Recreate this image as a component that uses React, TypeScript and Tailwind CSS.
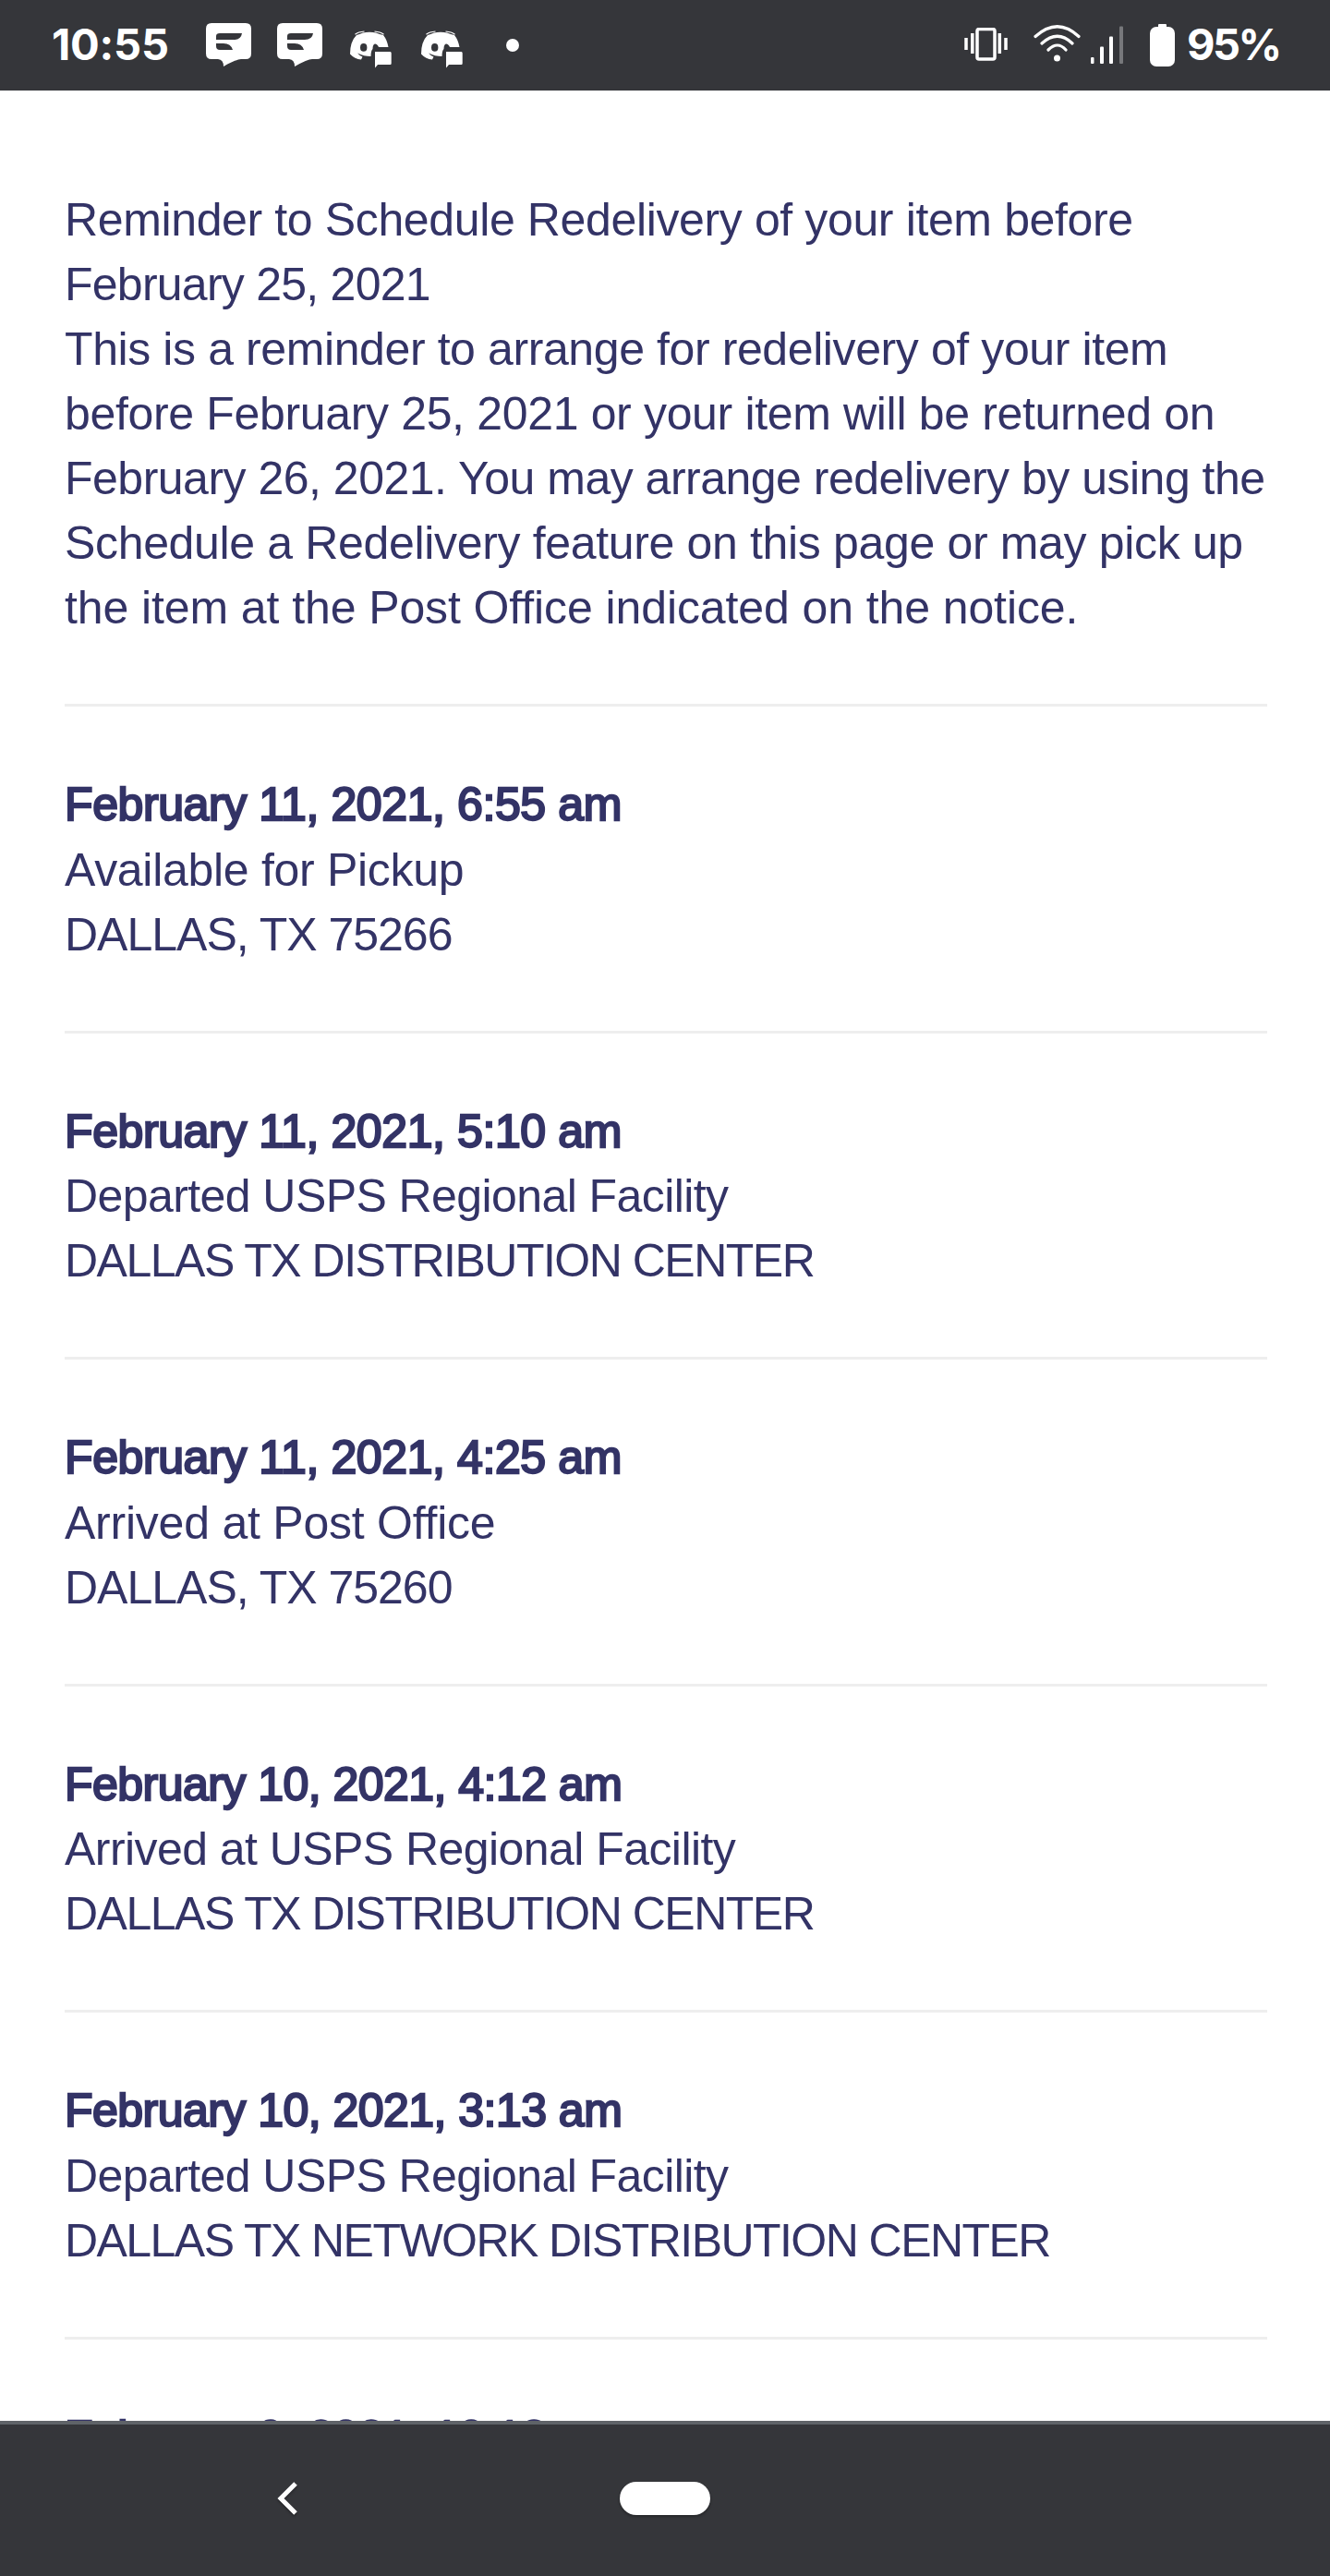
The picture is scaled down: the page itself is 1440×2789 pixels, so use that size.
import React from "react";
import clsx from "clsx";

interface TextLine {
  text: string;
  tracking: string;
}

interface TrackingEvent {
  date: TextLine;
  status?: TextLine;
  location?: TextLine;
}

const reminderLines: TextLine[] = [
  { text: "Reminder to Schedule Redelivery of your item before", tracking: "tracking-[-0.37px]" },
  { text: "February 25, 2021", tracking: "tracking-[-0.75px]" },
  { text: "This is a reminder to arrange for redelivery of your item", tracking: "tracking-[-0.4px]" },
  { text: "before February 25, 2021 or your item will be returned on", tracking: "tracking-[-0.34px]" },
  { text: "February 26, 2021. You may arrange redelivery by using the", tracking: "tracking-[-0.5px]" },
  { text: "Schedule a Redelivery feature on this page or may pick up", tracking: "tracking-[-0.34px]" },
  { text: "the item at the Post Office indicated on the notice.", tracking: "tracking-[-0.1px]" },
];

const events: TrackingEvent[] = [
  {
    date: { text: "February 11, 2021, 6:55 am", tracking: "tracking-[-0.4px]" },
    status: { text: "Available for Pickup", tracking: "tracking-[-0.3px]" },
    location: { text: "DALLAS, TX 75266", tracking: "tracking-[-1px]" },
  },
  {
    date: { text: "February 11, 2021, 5:10 am", tracking: "tracking-[-0.4px]" },
    status: { text: "Departed USPS Regional Facility", tracking: "tracking-[-0.58px]" },
    location: { text: "DALLAS TX DISTRIBUTION CENTER", tracking: "tracking-[-1.5px]" },
  },
  {
    date: { text: "February 11, 2021, 4:25 am", tracking: "tracking-[-0.4px]" },
    status: { text: "Arrived at Post Office", tracking: "tracking-[-0.23px]" },
    location: { text: "DALLAS, TX 75260", tracking: "tracking-[-1px]" },
  },
  {
    date: { text: "February 10, 2021, 4:12 am", tracking: "tracking-[-0.53px]" },
    status: { text: "Arrived at USPS Regional Facility", tracking: "tracking-[-0.56px]" },
    location: { text: "DALLAS TX DISTRIBUTION CENTER", tracking: "tracking-[-1.5px]" },
  },
  {
    date: { text: "February 10, 2021, 3:13 am", tracking: "tracking-[-0.53px]" },
    status: { text: "Departed USPS Regional Facility", tracking: "tracking-[-0.58px]" },
    location: { text: "DALLAS TX NETWORK DISTRIBUTION CENTER", tracking: "tracking-[-1.55px]" },
  },
  {
    date: { text: "February 9, 2021, 10:18", tracking: "tracking-[-0.53px]" },
  },
];

const ChatIcon: React.FC = () => (
  <svg width="49" height="47" viewBox="0 0 49 47" fill="#fff">
    <path
      fillRule="evenodd"
      d="M6 0H43Q49 0 49 6V33Q49 39 43 39H38Q33 39 19 47Q19 39.500 13 39H6Q0 39 0 33V6Q0 0 6 0ZM15 11Q11 11 11 14V18H30Q38 18 39 11ZM11 22V25Q11 29 15 29H29Q27 22 19 22Z"
    />
  </svg>
);

const DiscordIcon: React.FC = () => (
  <svg width="46" height="41" viewBox="0 0 46 41" fill="#fff">
    <path
      fillRule="evenodd"
      d="M7 5Q10 4 14 2.500Q21 1 28 2.500Q32 4 36 5Q40 10 41.500 18H31Q29.500 14.500 27 14.500Q24.500 15 24.500 20Q22.500 22 22.500 28Q15 28 8 24.500Q11 28 13.500 28.500L12 31.500Q5 31 0 25.500Q0 12 7 5ZM14.700 14A3.700 4.400 0 1 0 14.700 22.800A3.700 4.400 0 1 0 14.700 14Z"
    />
    <path d="M5.500 4.300Q9 1.500 15.500 1M36.500 4.300Q33 1.500 26.500 1" fill="none" stroke="#fff" strokeWidth="1.200" />
    <path d="M27 23H43.500Q44.700 23 44.700 24.500V35.500Q44.700 37 43.500 37H30L27 40.500Z" />
  </svg>
);

const VibrateIcon: React.FC = () => (
  <svg width="48" height="36" viewBox="0 0 48 36" fill="none" stroke="#fff" strokeWidth="3.500">
    <rect x="14" y="1.500" width="19" height="32.500" rx="2" />
    <path d="M2 11V24M8.800 6V28M38.300 6V28M45 11V24" />
  </svg>
);

const WifiIcon: React.FC = () => (
  <svg width="52" height="40" viewBox="0 0 52 40" fill="none" stroke="#fff" strokeWidth="3.200" strokeLinecap="round">
    <path d="M2 12.500Q26 -9 49 12.500M9 20Q26 4.600 42 20M16 27Q26 17 35 27" />
    <circle cx="25.500" cy="36" r="3.500" fill="#fff" stroke="none" />
  </svg>
);

const SignalIcon: React.FC = () => (
  <svg width="36" height="41" viewBox="0 0 36 41" fill="#fff">
    <rect x="0" y="34" width="3.500" height="7" rx="1" />
    <rect x="10" y="22.500" width="4" height="18.500" rx="1" />
    <rect x="20" y="11.500" width="4" height="29.500" rx="1" />
    <rect x="31" y="0.500" width="4" height="40.500" rx="1" fill="#77787b" />
  </svg>
);

const StatusBar: React.FC = () => (
  <div className="flex h-[98px] shrink-0 items-start bg-[#35363a] font-[Inter,sans-serif] text-[47px] leading-[56px] font-bold text-white">
    <span className="mt-[20px] ml-[56px] w-[167px] tracking-[-0.2px]">10:55</span>
    <div className="mt-[25px] flex">
      <div className="w-[77px]"><ChatIcon /></div>
      <div className="w-[79px]"><ChatIcon /></div>
      <div className="mt-[8px] w-[77px]"><DiscordIcon /></div>
      <div className="mt-[8px] w-[92px]"><DiscordIcon /></div>
    </div>
    <div className="mt-[42px] h-[14px] w-[14px] rounded-full bg-white" />
    <div className="mt-[30px] ml-auto"><VibrateIcon /></div>
    <div className="mt-[27px] ml-[27px]"><WifiIcon /></div>
    <div className="mt-[28px] ml-[10px]"><SignalIcon /></div>
    <div className="mt-[26px] ml-[28px] flex flex-col items-center">
      <div className="h-[3px] w-[9px] rounded-t-[1px] bg-white" />
      <div className="h-[43px] w-[27px] rounded-[7px] bg-white" />
    </div>
    <span className="mt-[20px] ml-[13px] w-[155px] tracking-[-2.5px]">95%</span>
  </div>
);

const EventRow: React.FC<{ event: TrackingEvent }> = ({ event }) => (
  <div className="h-[353.5px] shrink-0 border-t-[3px] border-[#eeeeee] pt-[71px]">
    <p className={clsx("h-[70.5px] [-webkit-text-stroke:2.3px_#333366]", event.date.tracking)}>{event.date.text}</p>
    {event.status && <p className={event.status.tracking}>{event.status.text}</p>}
    {event.location && <p className={event.location.tracking}>{event.location.text}</p>}
  </div>
);

const App: React.FC = () => {
  return (
    <div className="flex h-[2789px] w-[1440px] flex-col overflow-hidden bg-white">
      <StatusBar />
      <main className="flex h-[2523px] shrink-0 flex-col overflow-hidden pr-[68px] pl-[70px] font-['Liberation_Sans',Arial,sans-serif] text-[50px] leading-[70px] whitespace-nowrap text-[#333366]">
        <div className="h-[664px] shrink-0 pt-[105px]">
          {reminderLines.map((line) => (
            <p key={line.text} className={line.tracking}>{line.text}</p>
          ))}
        </div>
        {events.map((event) => (
          <EventRow key={event.date.text} event={event} />
        ))}
      </main>
      <nav className="flex h-[168px] shrink-0 border-t-[4px] border-[#5f6368] bg-[#35363a]">
        <svg className="mt-[62px] ml-[300px] drop-shadow-[0_2px_1px_rgba(0,0,0,0.3)]" width="22" height="36" viewBox="0 0 22 36" fill="none" stroke="#fff" strokeWidth="5">
          <path d="M20 2L4 18L20 34" />
        </svg>
        <div className="mt-[62px] ml-[349px] h-[36px] w-[98px] rounded-full bg-white shadow-[0_2px_3px_rgba(0,0,0,0.3)]" />
      </nav>
    </div>
  );
};

export default App;
